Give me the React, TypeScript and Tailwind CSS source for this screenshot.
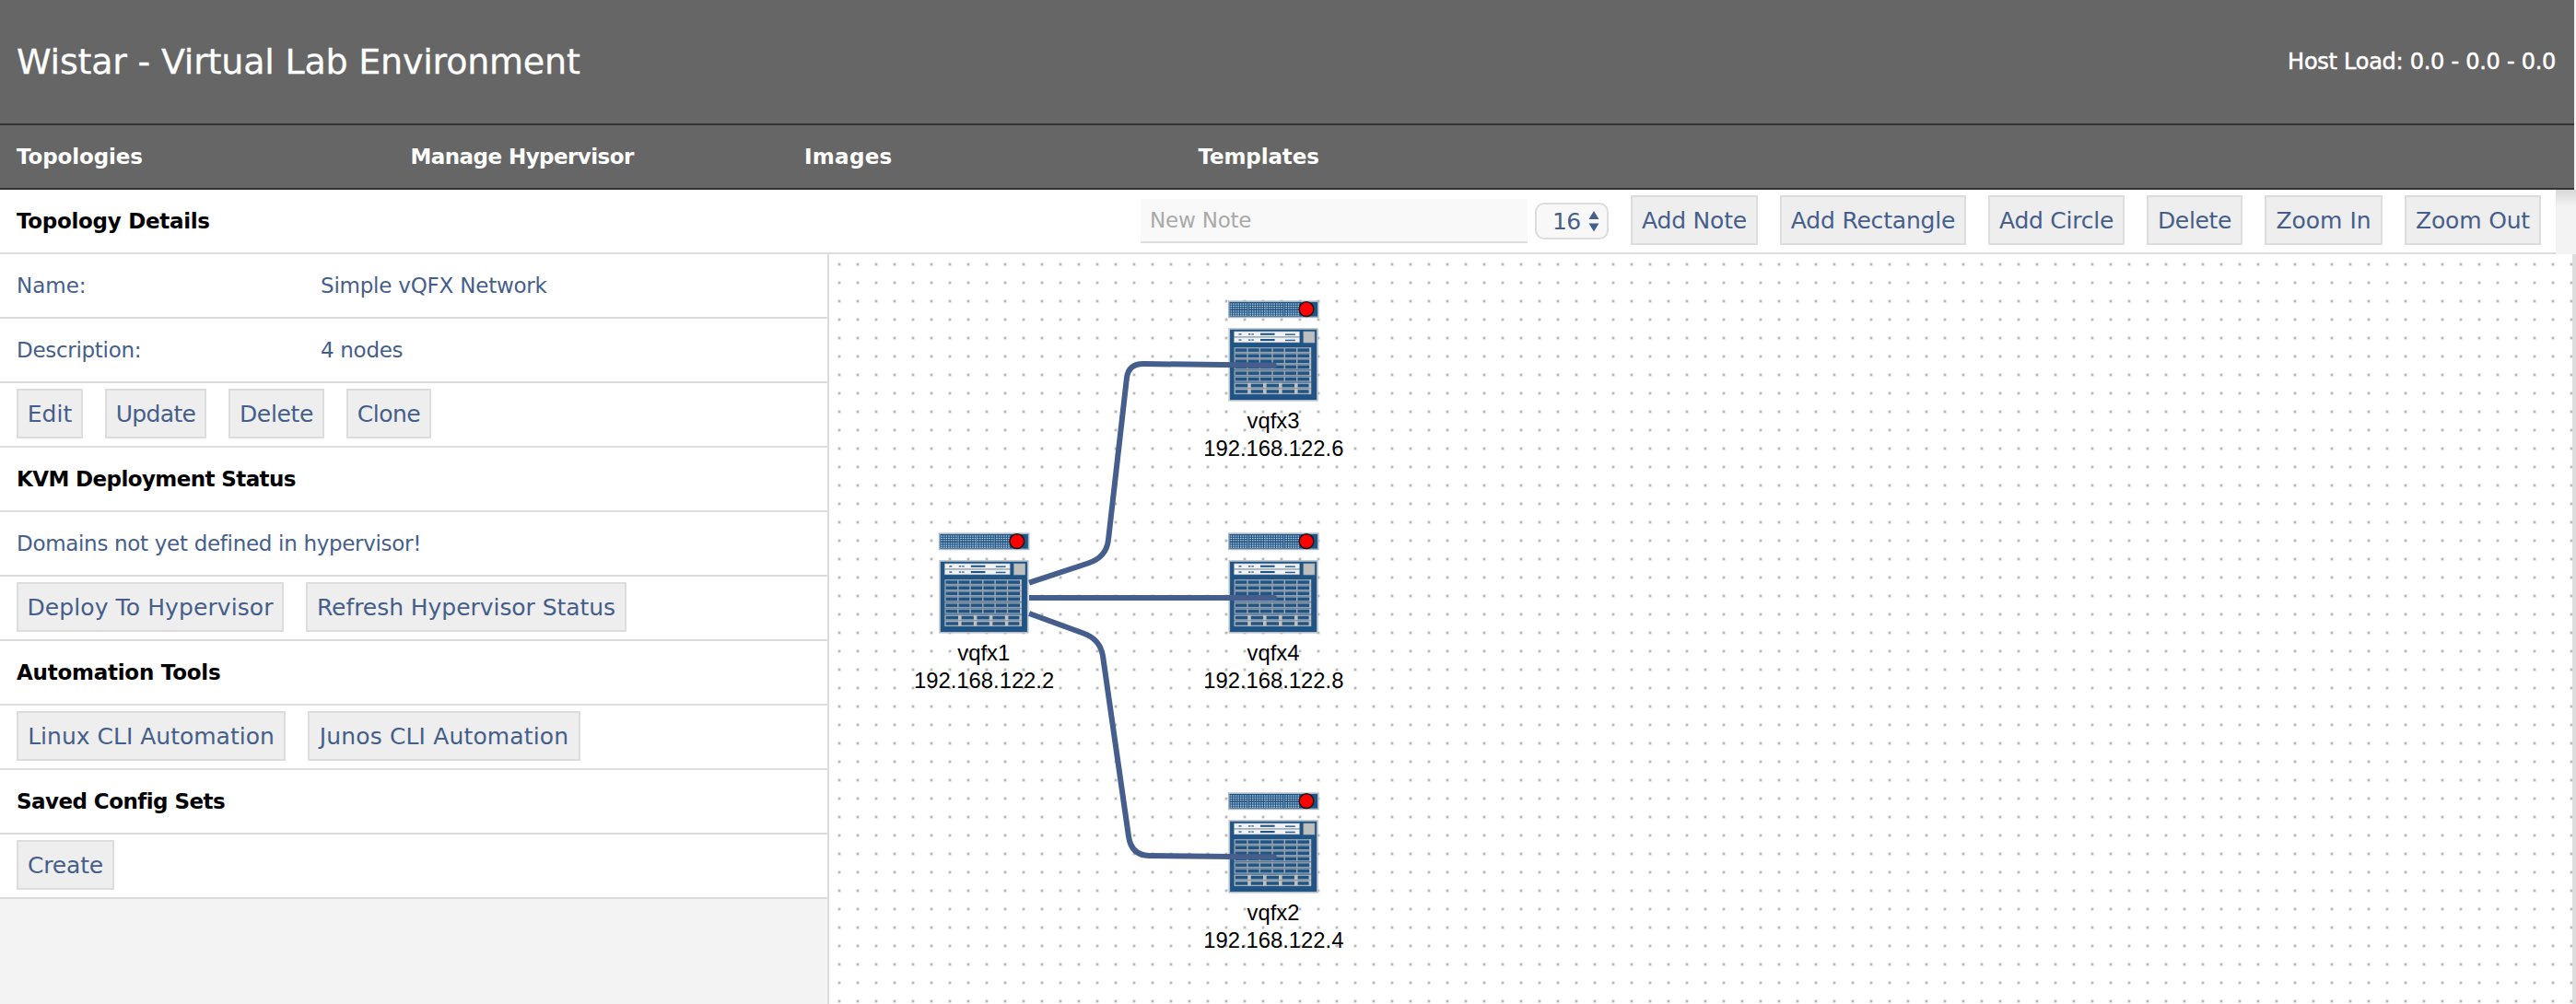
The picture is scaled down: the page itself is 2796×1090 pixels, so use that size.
import React from 'react';

type Item = { label: string; cls: string };

const NAV: Item[] = [
  { label: 'Topologies', cls: 'tracking-[-0.12px]' },
  { label: 'Manage Hypervisor', cls: 'tracking-[-0.56px]' },
  { label: 'Images', cls: 'tracking-[0.3px]' },
  { label: 'Templates', cls: 'tracking-[-0.12px]' },
];

const TOOLS: Item[] = [
  { label: 'Add Note', cls: 'w-[138px] tracking-[-0.2px]' },
  { label: 'Add Rectangle', cls: 'w-[202px] tracking-[-0.2px]' },
  { label: 'Add Circle', cls: 'w-[148px] tracking-[-0.25px]' },
  { label: 'Delete', cls: 'w-[104px] tracking-[-0.35px]' },
  { label: 'Zoom In', cls: 'w-[128px]' },
  { label: 'Zoom Out', cls: 'w-[148px] tracking-[-0.17px]' },
];

function Button({ label, cls }: Item) {
  return (
    <button
      className={`flex h-[54px] shrink-0 items-center justify-center whitespace-nowrap border-2 border-[#dddddd] bg-[#eeeeee] text-[25px] leading-none text-[#455e8b] ${cls}`}
    >
      {label}
    </button>
  );
}

function Row({ children }: { children: React.ReactNode }) {
  return (
    <div className="flex h-[70px] items-center whitespace-nowrap border-b-2 border-[#dddddd] bg-white pl-[18px]">
      {children}
    </div>
  );
}

function Heading({ label, cls }: Item) {
  return (
    <Row>
      <h2 className={`text-[23px] font-bold leading-none text-black ${cls}`}>{label}</h2>
    </Row>
  );
}

function Buttons({ items }: { items: Item[] }) {
  return (
    <Row>
      <div className="mb-0.5 flex gap-6">
        {items.map((b) => (
          <Button key={b.label} {...b} />
        ))}
      </div>
    </Row>
  );
}

const BLUE = '#1f5484';
const ROWS = [51.3, 57.5, 63.5, 69.6, 76.4, 82.8];
const SEPARATORS = [21, 34.3, 48, 61.3, 74.7];
const PORTS = Array.from({ length: 29 }, (_, i) => 2.6 + i * 2.6);

function Device() {
  return (
    <g>
      <rect x="0.8" y="1.2" width="97" height="17.2" fill={BLUE} stroke="#a9b8c6" strokeWidth="1.6" />
      {[3.4, 5.8, 8.2, 11.2, 13.6, 15.6].map((y) => (
        <g key={y} fill="#c9dbea">
          {PORTS.map((x) => (
            <rect key={x} x={x} y={y} width="1.5" height="1.2" />
          ))}
        </g>
      ))}
      {[20.8, 40.4, 60].map((x) => (
        <rect key={x} x={x} y="3" width="1" height="14" fill="#5d87ad" />
      ))}
      <circle cx="85" cy="9.7" r="7.9" fill="#ff0000" stroke="#1a1a1a" strokeWidth="1.5" />

      <rect x="1.3" y="31" width="95.6" height="77.8" fill={BLUE} stroke="#b4bec7" strokeWidth="1.6" />
      {[34, 40.3].map((y) => (
        <g key={y}>
          <rect x="6.7" y={y} width="70.6" height="5.5" fill="#f1f2f3" stroke="#b5bcc4" strokeWidth="0.6" />
          <rect x="11.5" y={y + 2} width="3" height="1.6" fill="#4a7397" />
          <rect x="22" y={y + 2} width="2.4" height="1.6" fill="#4a7397" />
          <rect x="25.4" y={y + 2} width="2.4" height="1.6" fill="#4a7397" />
          <rect x="35" y={y + 1.7} width="15.6" height="2.1" fill={BLUE} />
          <rect x="62" y={y + 2.4} width="10.8" height="1.5" fill="#2f6290" />
        </g>
      ))}
      <rect x="81.9" y="34" width="12" height="12" fill="#bfbfbf" stroke="#9fabb6" strokeWidth="0.6" />

      {ROWS.map((y) => (
        <g key={y}>
          <rect x="7.2" y={y + 0.4} width="82.4" height="4.8" fill={BLUE} stroke="#929fac" strokeWidth="1.4" />
          {SEPARATORS.map((x) => (
            <rect key={x} x={x - 0.7} y={y} width="1.4" height="5.4" fill="#9ba9b5" />
          ))}
          <rect x="88.2" y={y} width="1.8" height="5.6" fill="#b9bfc5" />
        </g>
      ))}
      {[89.8, 96.2].map((y) => (
        <g key={y}>
          <rect x="7.2" y={y + 0.4} width="82.4" height="4.8" fill={BLUE} stroke="#a3adb6" strokeWidth="1.4" />
          {[21.2, 38, 55, 72].map((x) => (
            <rect key={x} x={x} y={y} width="3.6" height="5.4" fill="#bfbfbf" />
          ))}
          <rect x="87.6" y={y} width="2.4" height="5.6" fill="#bfbfbf" />
        </g>
      ))}
    </g>
  );
}

const NODES = [
  { name: 'vqfx3', ip: '192.168.122.6', x: 1333, y: 326 },
  { name: 'vqfx1', ip: '192.168.122.2', x: 1018.8, y: 578 },
  { name: 'vqfx4', ip: '192.168.122.8', x: 1333, y: 578 },
  { name: 'vqfx2', ip: '192.168.122.4', x: 1333, y: 860 },
];

const LINKS = [
  'M1117 632.6L1181 611.5Q1201 605 1203 586L1223 410Q1225 394.5 1242 395L1383 396.8',
  'M1117 649H1383',
  'M1117 666L1176 687.5Q1194 694 1197 712L1225 908Q1228 928.5 1247 929L1383 930.6',
];

function Canvas() {
  return (
    <svg className="block h-full w-full" viewBox="900 276 1892 814">
      <defs>
        <pattern id="dots" x="900" y="276" width="20" height="20" patternUnits="userSpaceOnUse">
          <rect x="9" y="9" width="4" height="4" fill="#f1f1f1" />
          <path d="M10 9h2v4h-2zM9 10h4v2h-4z" fill="#e4e4e4" />
          <rect x="10" y="10" width="2" height="2" fill="#b9b9b9" />
        </pattern>
      </defs>
      <rect x="900" y="276" width="1892" height="814" fill="#ffffff" />
      <rect x="900" y="276" width="1892" height="814" fill="url(#dots)" />
      {NODES.map((n) => (
        <g key={n.name} transform={`translate(${n.x} ${n.y})`}>
          <Device />
          <g fontFamily="'Liberation Sans', Arial, sans-serif" fontSize="23.8" textAnchor="middle" fill="#000000">
            <text x="49" y="139.2">{n.name}</text>
            <text x="49.3" y="169.2">{n.ip}</text>
          </g>
        </g>
      ))}
      <g fill="none" stroke="#455e8b" strokeWidth="6" strokeLinejoin="round">
        {LINKS.map((d) => (
          <path key={d} d={d} />
        ))}
      </g>
      <g fill="#455e8b">
        <circle cx="1383" cy="396.8" r="3" />
        <circle cx="1383" cy="649" r="3" />
        <circle cx="1383" cy="930.6" r="3" />
      </g>
    </svg>
  );
}

export default function App() {
  return (
    <div className="flex h-[1090px] w-[2796px] flex-col overflow-hidden bg-[#f3f3f3] font-['Verdana','DejaVu_Sans',sans-serif]">
      <header className="mr-0.5 flex h-[136px] shrink-0 items-center justify-between border-b-2 border-[#333333] bg-[#666666] pl-[18px] pr-5 text-white">
        <h1 className="text-[38px] leading-none tracking-[-0.21px] [-webkit-text-stroke:0.3px_white]">
          Wistar - Virtual Lab Environment
        </h1>
        <span className="text-[24px] leading-none tracking-[-0.27px] [-webkit-text-stroke:0.5px_white]">
          Host Load: 0.0 - 0.0 - 0.0
        </span>
      </header>
      <nav className="mr-0.5 flex h-[70px] shrink-0 items-center border-b-2 border-[#333333] bg-[#666666] pl-[18px] text-[23px] font-bold leading-none text-white">
        {NAV.map((n) => (
          <a key={n.label} className={`w-[427.5px] ${n.cls}`}>
            {n.label}
          </a>
        ))}
      </nav>

      <div className="flex h-[70px] shrink-0">
        <div className="flex h-full w-[2774px] items-center border-b-2 border-[#dddddd] bg-white pl-[18px] pr-4">
          <h2 className="text-[23px] font-bold leading-none tracking-[-0.3px] text-black">Topology Details</h2>
          <div className="ml-auto flex items-center">
            <div className="flex h-12 w-[420px] items-center border-b-2 border-[#dddddd] bg-[#f9f9f9] pl-2.5 text-[23px] leading-none tracking-[-0.2px] text-[#a9a9a9]">
              New Note
            </div>
            <div className="ml-2 flex h-10 w-20 items-center justify-between rounded-[10px] border-2 border-[#dddddd] bg-[#f8f8f8] pl-[17px] pr-2 text-[25px] leading-none tracking-[-0.6px] text-[#455e8b]">
              16
              <svg width="12" height="24" viewBox="0 0 12 24" fill="#455e8b">
                <path d="M6 1l5.5 9H.5zM6 23.5L.5 14.5h11z" />
              </svg>
            </div>
            <div className="mb-0.5 ml-6 flex gap-6">
              {TOOLS.map((t) => (
                <Button key={t.label} {...t} />
              ))}
            </div>
          </div>
        </div>
        <div className="h-full flex-1 bg-[linear-gradient(#d8d8d8,#e4e4e4_8px,#f3f3f3_18px)]" />
      </div>

      <div className="flex min-h-0 flex-1">
        <aside className="w-[900px] shrink-0 border-r-2 border-[#dddddd] text-[23px] leading-none text-[#455e8b]">
          <Row>
            <span className="w-[330px]">Name:</span>
            <span className="tracking-[-0.22px]">Simple vQFX Network</span>
          </Row>
          <Row>
            <span className="w-[330px] tracking-[-0.3px]">Description:</span>
            <span className="tracking-[-0.3px]">4 nodes</span>
          </Row>
          <Buttons
            items={[
              { label: 'Edit', cls: 'w-[72px]' },
              { label: 'Update', cls: 'w-[110px] tracking-[-0.65px]' },
              { label: 'Delete', cls: 'w-[104px] tracking-[-0.35px]' },
              { label: 'Clone', cls: 'w-[92px] tracking-[-0.5px]' },
            ]}
          />
          <Heading label="KVM Deployment Status" cls="tracking-[-0.6px]" />
          <Row>
            <span className="tracking-[-0.31px]">Domains not yet defined in hypervisor!</span>
          </Row>
          <Buttons
            items={[
              { label: 'Deploy To Hypervisor', cls: 'w-[290px] tracking-[0.1px]' },
              { label: 'Refresh Hypervisor Status', cls: 'w-[348px] tracking-[-0.05px]' },
            ]}
          />
          <Heading label="Automation Tools" cls="tracking-[-0.25px]" />
          <Buttons
            items={[
              { label: 'Linux CLI Automation', cls: 'w-[292px]' },
              { label: 'Junos CLI Automation', cls: 'w-[296px] tracking-[0.15px]' },
            ]}
          />
          <Heading label="Saved Config Sets" cls="tracking-[-0.55px]" />
          <Buttons items={[{ label: 'Create', cls: 'w-[106px] tracking-[-0.2px]' }]} />
        </aside>
        <main className="min-w-0 flex-1 border-r-4 border-[#dddddd]">
          <Canvas />
        </main>
      </div>
    </div>
  );
}
